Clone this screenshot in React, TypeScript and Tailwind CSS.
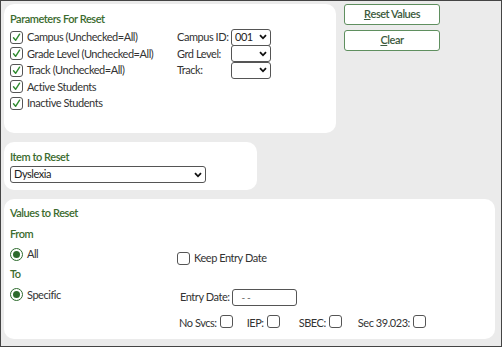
import type { ReactNode } from "react";

const FONT = { fontFamily: "Lato, 'Open Sans', 'Noto Sans', sans-serif" };

function Check({ checked = false }: { checked?: boolean }) {
  return (
    <span className="inline-flex h-[13px] w-[13px] shrink-0 items-center justify-center rounded-[3px] border border-[#555] bg-white">
      {checked && (
        <svg width="9" height="9" viewBox="0 0 9 9">
          <path d="M1.5 4.8 L3.6 7.3 L7.6 1.2" fill="none" stroke="#2f8a2f" strokeWidth="1.4" strokeLinecap="round" strokeLinejoin="round" />
        </svg>
      )}
    </span>
  );
}

function Radio() {
  return (
    <span className="inline-flex h-[13px] w-[13px] shrink-0 items-center justify-center rounded-full border-[1.5px] border-[#2d6b2d] bg-white">
      <span className="h-[7px] w-[7px] rounded-full bg-[#2d6b2d]" />
    </span>
  );
}

function Select({ value = "", width }: { value?: string; width: string }) {
  return (
    <div className={`flex h-[17px] shrink-0 items-center justify-between rounded-[3px] border border-[#555] bg-white pl-[3px] pr-[3px] text-[11px] text-[#222] ${width}`}>
      <span>{value}</span>
      <svg width="8" height="6" viewBox="0 0 8 6">
        <path d="M1 1.2 L4 4.3 L7 1.2" fill="none" stroke="#111" strokeWidth="1.8" />
      </svg>
    </div>
  );
}

function Title({ children }: { children: ReactNode }) {
  return <div className="whitespace-nowrap text-[11px] font-semibold leading-[14px] text-[#3b6b2e]">{children}</div>;
}

function CheckRow({ label, children }: { label: string; children?: ReactNode }) {
  return (
    <div className="flex h-[16.5px] items-center whitespace-nowrap">
      <div className="flex w-[167px] shrink-0 items-center gap-[4px]">
        <Check checked />
        <span>{label}</span>
      </div>
      {children}
    </div>
  );
}

function Button({ first, rest }: { first: string; rest: string }) {
  return (
    <button className="flex h-[21px] w-[96px] items-center justify-center rounded-[3px] border border-[#5f8f5f] bg-white text-[11px] font-semibold text-[#3c5a3c]">
      <span className="underline">{first}</span>
      {rest}
    </button>
  );
}

export default function App() {
  return (
    <div className="h-[347px] w-[502px] border border-[#444] bg-[#ebebeb] p-[3px] text-[11px] tracking-[-0.45px] text-[#333]" style={FONT}>
      <div className="flex gap-[8px]">
        <div className="h-[129px] w-[332px] rounded-[10px] bg-white pl-[6px] pt-[8px]">
          <Title>Parameters For Reset</Title>
          <div className="mt-[3px]">
            <CheckRow label="Campus (Unchecked=All)">
              <span className="w-[54px] shrink-0">Campus ID:</span>
              <Select value="001" width="w-[40px]" />
            </CheckRow>
            <CheckRow label="Grade Level (Unchecked=All)">
              <span className="w-[54px] shrink-0">Grd Level:</span>
              <Select width="w-[40px]" />
            </CheckRow>
            <CheckRow label="Track (Unchecked=All)">
              <span className="w-[54px] shrink-0">Track:</span>
              <Select width="w-[40px]" />
            </CheckRow>
            <CheckRow label="Active Students" />
            <CheckRow label="Inactive Students" />
          </div>
        </div>
        <div className="flex flex-col gap-[5px]">
          <Button first="R" rest="eset Values" />
          <Button first="C" rest="lear" />
        </div>
      </div>

      <div className="mt-[9px] h-[48px] w-[253px] rounded-[10px] bg-white pl-[6px] pt-[8px]">
        <Title>Item to Reset</Title>
        <div className="mt-[2px]">
          <Select value="Dyslexia" width="w-[196px]" />
        </div>
      </div>

      <div className="mt-[9px] flex h-[140px] w-[491px] rounded-[10px] bg-white pl-[6px] pt-[7px] whitespace-nowrap">
        <div className="w-[167px] shrink-0">
          <Title>Values to Reset</Title>
          <div className="mt-[7px]">
            <Title>From</Title>
          </div>
          <div className="mt-[5px] flex items-center gap-[4px]">
            <Radio />
            <span>All</span>
          </div>
          <div className="mt-[4px]">
            <Title>To</Title>
          </div>
          <div className="mt-[6px] flex items-center gap-[4px]">
            <Radio />
            <span>Specific</span>
          </div>
        </div>
        <div className="pt-[44px]">
          <div className="flex items-center gap-[4px]">
            <Check />
            <span>Keep Entry Date</span>
          </div>
          <div className="mt-[22px] flex items-center gap-[2px] pl-[3px]">
            <span>Entry Date:</span>
            <div className="h-[17px] w-[65px] rounded-[3px] border border-[#555] bg-white pl-[9px] text-[10px] leading-[14px] text-[#555]">- -</div>
          </div>
          <div className="mt-[9px] flex items-center pl-[2px]">
            <span>No Svcs:</span>
            <span className="ml-[3px]"><Check /></span>
            <span className="ml-[14px]">IEP:</span>
            <span className="ml-[3px]"><Check /></span>
            <span className="ml-[19px]">SBEC:</span>
            <span className="ml-[3px]"><Check /></span>
            <span className="ml-[16px]">Sec 39.023:</span>
            <span className="ml-[3px]"><Check /></span>
          </div>
        </div>
      </div>
    </div>
  );
}
